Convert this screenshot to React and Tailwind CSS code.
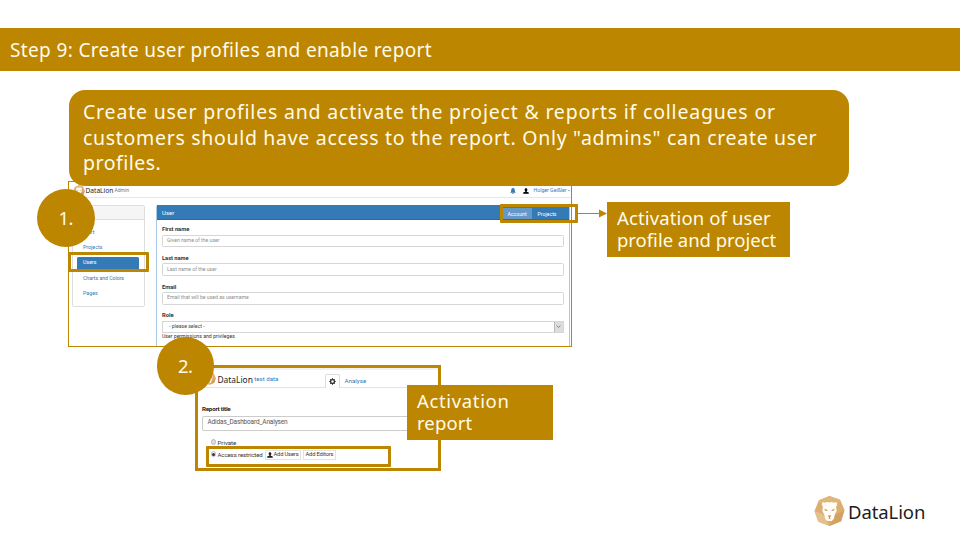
function LionMark({ className }) {
  return (
    <svg viewBox="0 0 32 32" className={className}>
      <path d="M16 0.5L27 4.5L31.5 15L28 26.5L16 31.5L4.5 27L0.5 16L5 5Z" fill="#dcae70" />
      <path d="M16 0.5L27 4.5L23 12L9 12L5 5Z" fill="#dfb67c" />
      <path d="M31.5 15L28 26.5L16 31.5L22 20Z" fill="#d3a263" />
      <path d="M0.5 16L4.5 27L16 31.5L9 19Z" fill="#e4c08d" />
      <path d="M8.2 8.6Q8.6 6.4 11 7.4L13.6 6.6L16 7.2L18.4 6.6L21 7.4Q23.4 6.4 23.8 8.6Q24 10.5 22.8 11.4L23.4 16L21.4 19.5L20.6 24L18.4 26.2H13.6L11.4 24L10.6 19.5L8.6 16L9.2 11.4Q8 10.5 8.2 8.6Z" fill="#fffdf8" />
      <path d="M10.8 13.6L14 15.2L13.6 16L11.2 15.2ZM21.2 13.6L18 15.2L18.4 16L20.8 15.2ZM14.2 20.6H17.8L16.4 22.6V23.4L18 24H14L15.6 23.4V22.6Z" fill="#b98648" />
    </svg>
  );
}

function BellIcon({ className }) {
  return (
    <svg viewBox="0 0 12 12" className={className} fill="currentColor">
      <path d="M6 0.2C3.4 0.6 2.4 2.4 2.4 5C2.4 7.4 1.6 8 0.4 9.4H11.6C10.4 8 9.6 7.4 9.6 5C9.6 2.4 8.6 0.6 6 0.2ZM4.4 10H7.6Q7.3 11.8 6 11.8Q4.7 11.8 4.4 10Z" />
    </svg>
  );
}

function UserIcon({ className }) {
  return (
    <svg viewBox="0 0 12 12" className={className} fill="currentColor">
      <path d="M6 0.3C7.8 0.3 8.9 1.6 8.7 3.6C8.6 5 8.1 6 7.4 6.6V7.3L10.8 8.7Q11.7 9.2 11.7 11.7H0.3Q0.3 9.2 1.2 8.7L4.6 7.3V6.6C3.9 6 3.4 5 3.3 3.6C3.1 1.6 4.2 0.3 6 0.3Z" />
    </svg>
  );
}

function GearIcon({ className }) {
  return (
    <svg viewBox="0 0 12 12" className={className} fill="none" stroke="currentColor">
      <circle cx="6" cy="6" r="3.3" strokeWidth="2" />
      <path d="M6 0.6V2.5M6 9.5V11.4M0.6 6H2.5M9.5 6H11.4M2.2 2.2L3.5 3.5M8.5 8.5L9.8 9.8M9.8 2.2L8.5 3.5M3.5 8.5L2.2 9.8" strokeWidth="1.8" />
    </svg>
  );
}

function Field({ label, placeholder }) {
  return (
    <div className="h-[28.8px]">
      <div className="h-[9.5px] text-[5.8px] leading-[8px] font-bold tracking-[-0.05px] text-[#333]">{label}</div>
      <div className="flex h-[12.5px] items-center rounded-[1.5px] border border-[#d6d6d6] px-[4px] text-[5.2px] tracking-[-0.03px] text-[#8f8f8f]">
        {placeholder}
      </div>
    </div>
  );
}

function AdminPanel() {
  return (
    <div className="flex h-full flex-col overflow-hidden border border-[#bd8600] bg-white font-['Roboto',sans-serif]">
      <div className="flex h-[16px] shrink-0 items-center border-b border-[#e7e7e7] pt-[2px] pl-[4px] text-[#337ab7]">
        <LionMark className="h-[12px] w-[12px]" />
        <span className="ml-[0.5px] font-['Noto_Sans',sans-serif] text-[6.6px] leading-[8px] text-[#222]">DataLion</span>
        <span className="ml-[1.2px] text-[5px] leading-[7px] text-[#777]">Admin</span>
        <BellIcon className="ml-auto h-[6px] w-[6px]" />
        <UserIcon className="ml-[7px] h-[6px] w-[6px] text-black" />
        <span className="ml-[4px] text-[5.2px] leading-[7px] whitespace-nowrap">Holger Geißler</span>
        <span className="mr-px ml-[1.5px] border-x-[1.5px] border-t-[1.5px] border-x-transparent border-t-[#337ab7]" />
      </div>
      <div className="flex min-h-0 grow pt-[7px] pl-[2.5px]">
        <div className="h-[102px] w-[73.5px] shrink-0 rounded-[2px] border border-[#dedede] text-[5.3px] text-[#337ab7]">
          <div className="h-[14px] border-b border-[#dedede] bg-[#f5f5f5]" />
          <div className="flex flex-col pt-[4.6px] pr-[5px] pl-[4.5px] leading-[15.4px]">
            <div className="pl-[6px]">Start</div>
            <div className="pl-[6px]">Projects</div>
            <div className="my-[1.2px] flex h-[13px] items-center rounded-[1.5px] bg-[#337ab7] pl-[6px] text-white">Users</div>
            <div className="pl-[6px] tracking-[-0.08px]">Charts and Colors</div>
            <div className="pl-[6px]">Pages</div>
          </div>
        </div>
        <div className="ml-[10.5px] flex w-[414px] flex-col rounded-t-[2px] border-x border-[#a9c6e2]">
          <div className="flex h-[15px] shrink-0 items-end justify-between border-b border-[#2a6ba3] bg-[#337ab7] pl-[5.5px] text-white">
            <span className="self-center pt-px text-[6px] leading-[8px]">User</span>
            <div className="flex h-[11px] items-center text-[5.2px] leading-[7px]">
              <span className="flex h-full w-[29px] items-center justify-center bg-[#6498c9] pt-[2px]">Account</span>
              <span className="w-[37px] pt-[2px] pl-[6px]">Projects</span>
            </div>
          </div>
          <div className="pt-[5px] pr-[5px] pl-[5.5px]">
            <Field label="First name" placeholder="Given name of the user" />
            <Field label="Last name" placeholder="Last name of the user" />
            <Field label="Email" placeholder="Email that will be used as username" />
            <div className="h-[9.5px] text-[5.8px] leading-[8px] font-bold text-[#333]">Role</div>
            <div className="flex h-[12px] items-center justify-between border border-[#d6d6d6] pl-[6px] text-[5.2px] text-[#444]">
              <span>- please select -</span>
              <span className="flex h-full w-[9px] items-center justify-center border-l border-[#bbb] bg-[#ddd]">
                <svg viewBox="0 0 8 8" className="h-[5px] w-[5px]" fill="none" stroke="#555">
                  <path d="M1 2.5L4 5.5L7 2.5" />
                </svg>
              </span>
            </div>
            <div className="text-[5.2px] leading-[7px] tracking-[-0.02px] text-[#333]">User permissions and privileges</div>
          </div>
        </div>
      </div>
    </div>
  );
}

function ReportPanel() {
  return (
    <div className="flex h-full flex-col overflow-hidden border-3 border-[#bd8600] bg-white font-['Roboto',sans-serif]">
      <div className="flex h-[20px] shrink-0 items-end border-t-2 border-b border-t-[#f1f1f1] border-b-[#e3e3e3] pl-[5px]">
        <LionMark className="mb-[2px] h-[13px] w-[13px]" />
        <span className="mb-px ml-[1.5px] font-['Noto_Sans',sans-serif] text-[8.4px] leading-[13px] text-[#222]">DataLion</span>
        <span className="mb-[3px] ml-[1.5px] text-[6.1px] leading-[10px] text-[#337ab7]">test data</span>
        <div className="-mb-px ml-auto flex h-[14px] w-[15px] items-center justify-center rounded-t-[2px] border border-b-0 border-[#ddd] bg-white text-[#222]">
          <GearIcon className="h-[7px] w-[7px]" />
        </div>
        <span className="mb-px w-[98.5px] pl-[5px] text-[6.2px] leading-[10px] text-[#337ab7]">Analyse</span>
      </div>
      <div className="mt-[16.5px] pl-[4px] text-[6.2px] leading-[9px] font-bold tracking-[-0.22px] text-[#222]">Report title</div>
      <div className="mt-[2px] ml-[4px] flex h-[15px] shrink-0 items-center rounded-[2px] border border-[#ccc] pl-[4.5px] text-[6.5px] tracking-[-0.15px] text-[#555]">
        Adidas_Dashboard_Analysen
      </div>
      <div className="mt-[7.5px] flex h-[9px] items-center pl-[12.5px] text-[6.1px] text-[#333]">
        <span className="-mt-px h-[5.5px] w-[5.5px] rounded-full border border-[#bbb] bg-[#ddd]" />
        <span className="ml-[1.5px] pt-px">Private</span>
      </div>
      <div className="mt-[2.5px] flex h-[10px] items-center pl-[12.5px] text-[6.1px] whitespace-nowrap text-[#333]">
        <span className="-mt-px flex h-[5.5px] w-[5.5px] items-center justify-center rounded-full border border-[#bbb]">
          <span className="h-[3px] w-[3px] rounded-full bg-[#333]" />
        </span>
        <span className="ml-[1.5px] w-[46px] tracking-[-0.12px]">Access restricted</span>
        <span className="ml-[1.5px] flex h-[10px] w-[36px] items-center border border-[#e2e2e2] pl-px">
          <UserIcon className="h-[6px] w-[6px] text-[#222]" />
          <span className="ml-[0.5px] text-[5.7px] tracking-[-0.12px]">Add Users</span>
        </span>
        <span className="ml-[2px] flex h-[10px] w-[33px] items-center border border-[#e2e2e2] pl-[1.5px] text-[5.7px] tracking-[-0.12px]">Add Editors</span>
      </div>
    </div>
  );
}

function StepBadge({ children }) {
  return (
    <div className="flex h-[58px] w-[57.5px] items-center justify-center rounded-full bg-[#bd8600] pb-px text-[18.5px] tracking-[-0.5px] text-[#fffbea]">
      {children}
    </div>
  );
}

export default function App() {
  return (
    <div className="relative h-[540px] w-[960px] overflow-hidden bg-white pt-[28px] font-['Noto_Sans',sans-serif] text-[#fffbea]">
      <header className="flex h-[43px] items-center bg-[#bd8600] pt-[2px] pl-[10px] text-[19px] tracking-[0.36px] whitespace-nowrap">
        <h1>Step 9: Create user profiles and enable report</h1>
      </header>

      <div className="absolute top-[181px] left-[68px] h-[166px] w-[504px]">
        <AdminPanel />
      </div>
      <div className="absolute top-[90px] left-[69px] h-[96px] w-[780px] rounded-[16px] bg-[#bd8600] pt-[9px] pl-[14px] text-[19.5px] leading-[25.6px] whitespace-nowrap">
        <div className="tracking-[0.8px]">Create user profiles and activate the project &amp; reports if colleagues or</div>
        <div className="tracking-[0.69px]">customers should have access to the report. Only "admins" can create user</div>
        <div className="tracking-[0.5px]">profiles.</div>
      </div>
      <div className="absolute top-[252px] left-[68px] h-[20px] w-[81px] rounded-[1px] border-3 border-[#bd8600]" />
      <div className="absolute top-[204px] left-[500px] h-[19px] w-[78px] rounded-[1px] border-3 border-[#bd8600]" />
      <svg viewBox="0 0 30 10" className="absolute top-[208px] left-[577px] h-[10px] w-[30px]">
        <path d="M0 5.5H23" stroke="#bd8600" />
        <path d="M22 1.5L30 5.5L22 9.5Z" fill="#bd8600" />
      </svg>
      <div className="absolute top-[202px] left-[607px] h-[55px] w-[183px] bg-[#bd8600] pt-[5px] pl-[10px] text-[18.5px] leading-[22px] whitespace-nowrap">
        <div className="tracking-[0.13px]">Activation of user</div>
        <div className="tracking-[-0.02px]">profile and project</div>
      </div>
      <div className="absolute top-[189px] left-[37px]">
        <StepBadge>1.</StepBadge>
      </div>

      <div className="absolute top-[365px] left-[195px] h-[106px] w-[246px]">
        <ReportPanel />
      </div>
      <div className="absolute top-[446px] left-[206px] h-[21px] w-[185px] rounded-[1px] border-3 border-[#bd8600]" />
      <div className="absolute top-[385px] left-[407px] h-[55px] w-[146px] bg-[#bd8600] pt-[5px] pl-[10px] text-[18.5px] leading-[22px]">
        <div className="tracking-[0.65px]">Activation</div>
        <div className="tracking-[0.1px]">report</div>
      </div>
      <div className="absolute top-[337px] left-[156.5px]">
        <StepBadge>2.</StepBadge>
      </div>

      <div className="absolute top-[495px] left-[814px] flex items-center text-[#1d1d1d]">
        <LionMark className="h-[32px] w-[31px]" />
        <span className="ml-[3px] pt-[2px] text-[18.5px] leading-[30px] tracking-[-0.1px]">DataLion</span>
      </div>
    </div>
  );
}
